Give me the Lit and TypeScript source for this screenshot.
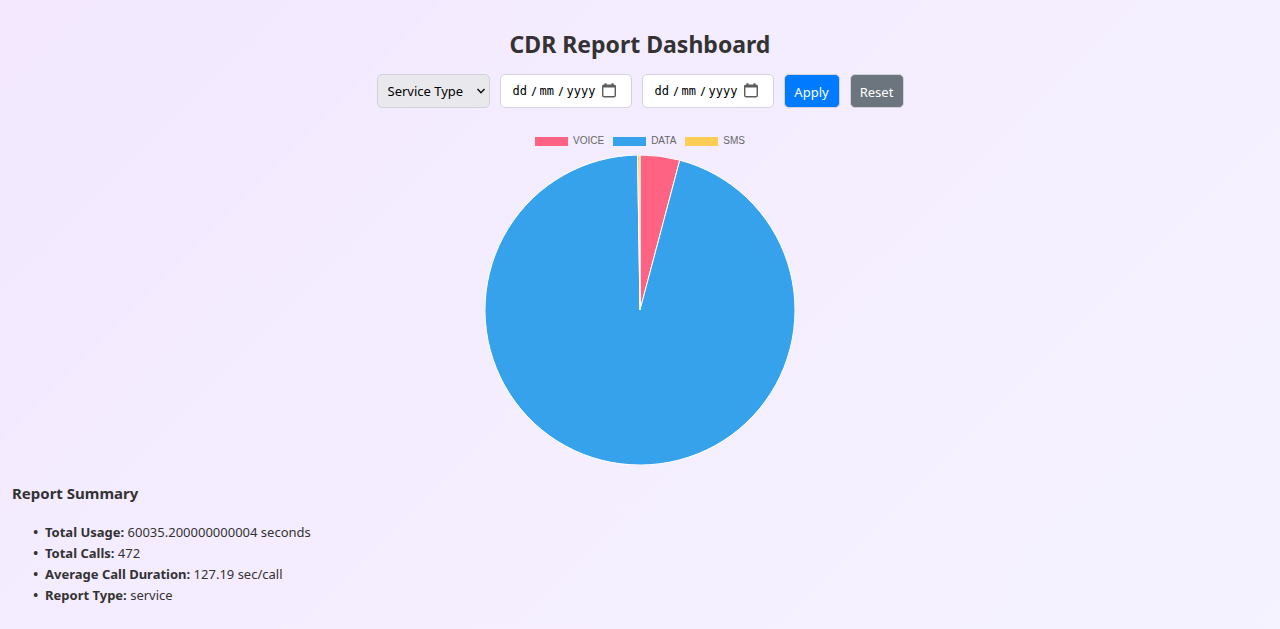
import { LitElement, html, svg, css } from "lit";
import { customElement, property } from "lit/decorators.js";

interface Slice {
  label: string;
  share: number;
  color: string;
}

const SLICES: Slice[] = [
  { label: "VOICE", share: 0.0413, color: "#ff6384" },
  { label: "DATA", share: 0.9562, color: "#36a2eb" },
  { label: "SMS", share: 0.0025, color: "#ffcd56" },
];

const SUMMARY: [string, string][] = [
  ["Total Usage:", "60035.200000000004 seconds"],
  ["Total Calls:", "472"],
  ["Average Call Duration:", "127.19 sec/call"],
  ["Report Type:", "service"],
];

@customElement("date-field")
export class DateField extends LitElement {
  @property() label = "";

  static styles = css`
    :host {
      display: block;
    }
    .field {
      display: flex;
      align-items: center;
      box-sizing: border-box;
      width: 132px;
      height: 34px;
      padding: 0 12px;
      border: 1px solid #d6d3de;
      border-radius: 5px;
      background: #fff;
      font: 13px "Noto Sans", sans-serif;
      color: #000;
    }
    .part {
      flex: none;
      width: 16px;
      padding: 0;
      border: 0;
      outline: 0;
      background: none;
      font: 12px "DejaVu Sans Mono", monospace;
      color: #000;
    }
    .year {
      width: 30px;
    }
    .part::placeholder {
      color: #000;
      opacity: 1;
    }
    .slash {
      flex: none;
      width: 11px;
      text-align: center;
    }
    .pick {
      flex: none;
      display: block;
      width: 16px;
      height: 16px;
      margin-left: 4px;
      padding: 0;
      border: 0;
      background: none;
    }
    .pick svg {
      display: block;
    }
  `;

  render() {
    return html`
      <div class="field" role="group" aria-label=${this.label}>
        <input class="part" placeholder="dd" maxlength="2" aria-label="Day" />
        <span class="slash">/</span>
        <input class="part" placeholder="mm" maxlength="2" aria-label="Month" />
        <span class="slash">/</span>
        <input class="part year" placeholder="yyyy" maxlength="4" aria-label="Year" />
        <button class="pick" type="button" aria-label="Open calendar">
          <svg width="16" height="16" viewBox="0 0 16 16" fill="none">
            <rect x="1.7" y="2.2" width="12.6" height="11.6" rx="1.5" stroke="#5c5c5c" stroke-width="1.4" />
            <path d="M1.5 3.6h13M4.5 0.3v2.5M11.5 0.3v2.5" stroke="#5c5c5c" stroke-width="2" />
          </svg>
        </button>
      </div>
    `;
  }
}

@customElement("usage-pie")
export class UsagePie extends LitElement {
  @property({ attribute: false }) slices: Slice[] = [];

  static styles = css`
    :host {
      display: block;
    }
    .legend {
      display: flex;
      justify-content: center;
      gap: 9px;
      margin: 0 0 7px;
      padding: 0;
      list-style: none;
      font: 10px/14px "Liberation Sans", Arial, sans-serif;
      color: #666;
    }
    .entry {
      display: flex;
      align-items: center;
      gap: 5px;
    }
    .swatch {
      width: 33px;
      height: 9px;
    }
    .pie {
      display: block;
      width: 310px;
      max-width: 100%;
      margin: 0 auto;
    }
  `;

  private wedges() {
    const r = 155;
    let turn = 0;
    const at = (t: number) => {
      const a = t * 2 * Math.PI;
      return `${155 + r * Math.sin(a)} ${155 - r * Math.cos(a)}`;
    };
    return this.slices.map((s) => {
      const from = at(turn);
      turn += s.share;
      const d = `M155 155L${from}A${r} ${r} 0 ${s.share > 0.5 ? 1 : 0} 1 ${at(turn)}Z`;
      return svg`<path d=${d} fill=${s.color} stroke="#fff" stroke-width="1" stroke-linejoin="bevel" />`;
    });
  }

  render() {
    return html`
      <ul class="legend">
        ${this.slices.map(
          (s) => html`<li class="entry">
            <span class="swatch" style="background:${s.color}"></span>${s.label}
          </li>`
        )}
      </ul>
      <svg class="pie" viewBox="0 0 310 310" role="img" aria-label="Usage by service type">
        ${this.wedges()}
      </svg>
    `;
  }
}

@customElement("app-root")
export class AppRoot extends LitElement {
  static styles = css`
    :host {
      display: block;
      box-sizing: border-box;
      min-height: 100vh;
      padding: 28px 12px 20px;
      background: linear-gradient(135deg, #f3e8ff, #f5f3ff);
      font: 13px/21px "Noto Sans", "Segoe UI", sans-serif;
      color: #333;
    }
    .title {
      margin: 0 0 14px;
      font-size: 23px;
      line-height: 32px;
      text-align: center;
    }
    .filters {
      display: flex;
      flex-wrap: wrap;
      justify-content: center;
      gap: 10px;
      margin-bottom: 26px;
    }
    .kind {
      display: grid;
      align-items: center;
    }
    .kind > * {
      grid-area: 1 / 1;
    }
    .arrow {
      justify-self: end;
      margin-right: 4px;
      pointer-events: none;
    }
    .select {
      appearance: none;
      box-sizing: border-box;
      width: 113px;
      height: 34px;
      padding: 0 10px;
      border: 1px solid #d3d1d8;
      border-radius: 5px;
      background: #e9e9ed;
      font: 13px "Noto Sans", sans-serif;
      color: #000;
    }
    .action {
      box-sizing: border-box;
      height: 34px;
      padding: 2px 0 0;
      border: 1px solid #d3d1d8;
      border-radius: 5px;
      font: 13px "Noto Sans", sans-serif;
      color: #fff;
    }
    .apply {
      width: 56px;
      background: #007bff;
    }
    .reset {
      width: 54px;
      background: #6c757d;
    }
    .heading {
      margin: 18px 0;
      font-size: 15px;
      line-height: 21px;
    }
    .facts {
      margin: 0;
      padding-left: 33px;
      list-style-type: "•  ";
    }
    .fact::marker {
      font-weight: 700;
    }
  `;

  render() {
    return html`
      <h1 class="title">CDR Report Dashboard</h1>
      <form class="filters" @submit=${(e: Event) => e.preventDefault()}>
        <div class="kind">
          <select class="select" aria-label="Report type">
            <option>Service Type</option>
          </select>
          <svg class="arrow" width="10" height="8" viewBox="0 0 10 8" fill="none">
            <path d="M1.5 2L5 5.7L8.5 2" stroke="#111" stroke-width="1.5" />
          </svg>
        </div>
        <date-field label="Start date"></date-field>
        <date-field label="End date"></date-field>
        <button class="action apply" type="submit">Apply</button>
        <button class="action reset" type="reset">Reset</button>
      </form>
      <usage-pie .slices=${SLICES}></usage-pie>
      <section>
        <h2 class="heading">Report Summary</h2>
        <ul class="facts">
          ${SUMMARY.map(([name, value]) => html`<li class="fact"><strong>${name}</strong> ${value}</li>`)}
        </ul>
      </section>
    `;
  }
}
